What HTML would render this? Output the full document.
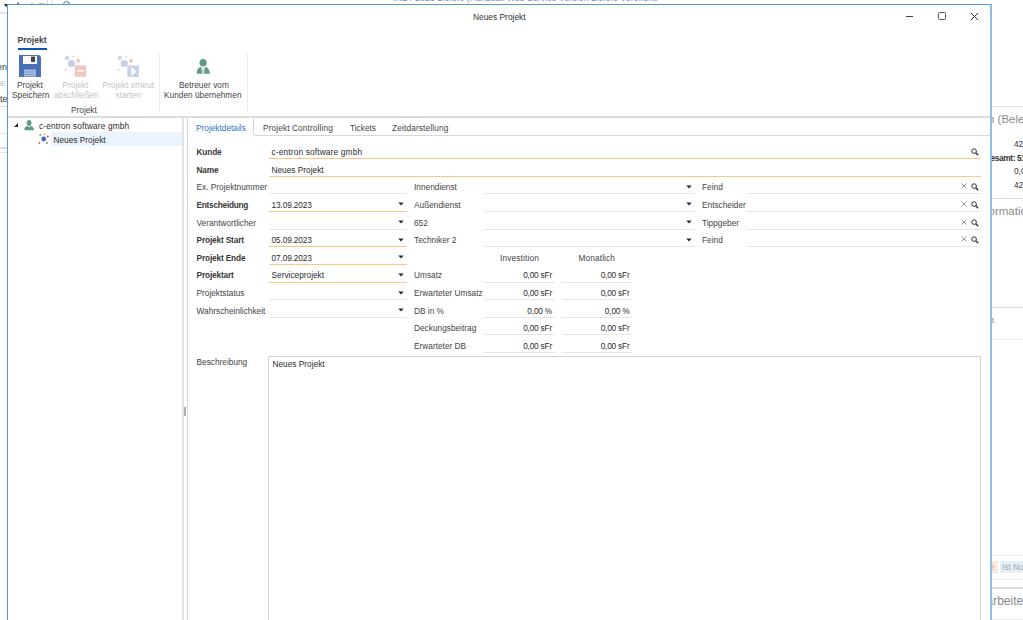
<!DOCTYPE html>
<html><head><meta charset="utf-8">
<style>
*{margin:0;padding:0;box-sizing:border-box}
html,body{width:1023px;height:620px;overflow:hidden;background:#fff;font-family:"Liberation Sans",sans-serif;position:relative}
.a{position:absolute}
.t{position:absolute;font-size:8.3px;line-height:10px;white-space:nowrap;color:#444}
.v{color:#2c2c2c}
.b{font-weight:bold;color:#383838;letter-spacing:-0.15px}
.d{color:#c4c4c4}
.hl{position:absolute;height:1px;background:#e6e6e6}
.ol{position:absolute;height:1px;background:#f7c986}
.arr{position:absolute;width:0;height:0;border-left:2.5px solid transparent;border-right:2.5px solid transparent;border-top:3px solid #333}
.r{text-align:right}
</style></head><body>

<!-- background app (behind dialog) -->
<div class="a" style="left:0;top:0;width:1023px;height:620px;background:#fff"></div>
<div class="hl" style="left:0;top:12px;width:7px;background:#e2e2e2;height:2px"></div>
<div class="t" style="left:-3px;top:61.5px;color:#333;font-size:9px">en</div>
<div class="t" style="left:-3px;top:78px;color:#bbb;font-size:9px">re</div>
<div class="t" style="left:-5px;top:93.5px;color:#333;font-size:9px">nte</div>
<div class="hl" style="left:0;top:106px;width:7px;background:#ddd"></div>
<div class="hl" style="left:0;top:133px;width:7px;background:#e2e2e2"></div>
<div class="hl" style="left:0;top:147px;width:7px;background:#ddd;height:2px"></div>
<div class="hl" style="left:0;top:152px;width:7px;background:#e2e2e2"></div>
<div class="a" style="left:4px;top:4px;width:0;height:0;border-left:2px solid transparent;border-right:2px solid transparent;border-top:3px solid #222"></div>
<div class="a" style="left:16.5px;top:2px;width:0;height:0;border-left:1.5px solid transparent;border-right:1.5px solid transparent;border-bottom:2.5px solid #333"></div>
<div class="a" style="left:47px;top:0;width:1px;height:5px;background:#ddd"></div>
<div class="a" style="left:51px;top:0;width:1px;height:5px;background:#e4e4e4"></div>
<div class="a" style="left:63px;top:0.5px;width:7px;height:7px;border:1.2px solid #3a7fd0;border-radius:50%"></div>
<div class="a" style="left:31px;top:3px;width:2px;height:1px;background:#bbb"></div><div class="a" style="left:38px;top:3px;width:7px;height:1px;background:#ccc"></div>
<div class="t" style="left:393px;top:-7px;font-size:8.6px;color:#888;letter-spacing:0.1px">.NET 2023 1.0.0.0 (Handball Web Service Version 1.0.0.0 Veröffentl</div>

<div class="hl" style="left:992px;top:106px;width:31px;background:#e0e0e0"></div>
<div class="t" style="left:988px;top:112.5px;font-size:11.5px;line-height:13px;color:#8a8a8a">n (Bele</div>
<div class="t" style="left:1014px;top:139px;color:#333">42</div>
<div class="t b" style="left:990.5px;top:153px;color:#333;letter-spacing:-0.35px">esamt: 51</div>
<div class="t" style="left:1014px;top:166px;color:#333">0,0</div>
<div class="t" style="left:1014px;top:180px;color:#333">42</div>
<div class="hl" style="left:992px;top:198px;width:31px;background:#e0e0e0"></div>
<div class="t" style="left:988.5px;top:205px;font-size:11.5px;line-height:13px;color:#8a8a8a">ormatio</div>
<div class="hl" style="left:992px;top:307px;width:31px;background:#dadada"></div>
<div class="t" style="left:989.5px;top:315px;color:#666;font-size:9px">k</div>
<div class="hl" style="left:992px;top:339px;width:31px;background:#f0f0f0"></div>
<div class="hl" style="left:992px;top:555px;width:31px;background:#efefef"></div>
<div class="a" style="left:992px;top:561px;width:6px;height:12px;background:#fbeadb"></div>
<div class="t" style="left:990px;top:562px;color:#bbb">e</div>
<div class="a" style="left:1000px;top:561px;width:23px;height:12px;background:#e6eef8"></div>
<div class="t" style="left:1002px;top:562px;color:#9aa">Ist Nu</div>
<div class="hl" style="left:992px;top:579px;width:31px;background:#efefef"></div>
<div class="hl" style="left:992px;top:587px;width:31px;background:#dcdcdc;height:2px"></div>
<div class="t" style="left:986.5px;top:594.5px;font-size:12px;line-height:13px;color:#8a8a8a">arbeitet</div>
<div class="hl" style="left:992px;top:619px;width:31px;background:#eee"></div>

<!-- dialog window -->
<div class="a" id="win" style="left:7px;top:4px;width:985px;height:620px;background:#fff;border-left:1px solid #5597d8;border-top:1px solid #5597d8;border-right:2px solid #8fbce3"></div>

<!-- title bar -->
<div class="t" style="left:473px;top:12px;font-size:8.4px;color:#333">Neues Projekt</div>
<div class="a" style="left:906px;top:16px;width:7px;height:1px;background:#444"></div>
<div class="a" style="left:938.3px;top:12.3px;width:7.7px;height:7.5px;border:1px solid #555;border-radius:1.5px"></div>
<svg class="a" style="left:970px;top:12px" width="9" height="9" viewBox="0 0 9 9"><path d="M1 1L8 8M8 1L1 8" stroke="#333" stroke-width="1"/></svg>

<!-- ribbon -->
<div class="t" style="left:17.5px;top:35px;font-size:8.6px;font-weight:bold;color:#444">Projekt</div>
<div class="a" style="left:17.5px;top:48px;width:29.5px;height:2px;background:#0a56b8"></div>

<!-- save icon -->
<svg class="a" style="left:19px;top:54.5px" width="23" height="23" viewBox="0 0 23 23">
<path d="M0 0H20L22 2V22H0Z" fill="#4a6fb6"/>
<rect x="4" y="1" width="14" height="8" fill="#fff"/>
<rect x="12" y="1.5" width="4" height="5.5" fill="#444"/>
<rect x="5" y="14.5" width="12" height="7" fill="#a9bde0"/>
<rect x="5" y="16.5" width="12" height="1" fill="#7f9ccf"/>
<rect x="5" y="19" width="12" height="1" fill="#7f9ccf"/>
</svg>
<div class="t" style="left:17px;top:80px">Projekt</div>
<div class="t" style="left:12px;top:90px">Speichern</div>

<!-- abschliessen icon -->
<svg class="a" style="left:58px;top:50px" width="32" height="30" viewBox="0 0 32 30">
<line x1="7.7" y1="19.8" x2="13" y2="14" stroke="#e8e8e8" stroke-width="0.8"/>
<line x1="15" y1="6.4" x2="13.5" y2="10" stroke="#e8e8e8" stroke-width="0.8"/>
<circle cx="9" cy="8" r="2.2" fill="#c9ddd2"/>
<circle cx="15.5" cy="6.4" r="1" fill="#c9ddd2"/>
<circle cx="13.5" cy="13.5" r="3.6" fill="#c3d0e8"/>
<circle cx="20.1" cy="10.7" r="2" fill="#f2c4ba"/>
<circle cx="7.7" cy="19.8" r="1" fill="#f2c4ba"/>
<rect x="16.8" y="15.5" width="11.3" height="11.3" fill="#f2c6bc"/>
<rect x="19.1" y="20.1" width="6.7" height="1.5" fill="#fff"/>
</svg>
<div class="t d" style="left:62.5px;top:80px">Projekt</div>
<div class="t d" style="left:54px;top:90px">abschließen</div>

<!-- erneut starten icon -->
<svg class="a" style="left:110px;top:50px" width="32" height="30" viewBox="0 0 32 30">
<line x1="8.5" y1="19.8" x2="14" y2="14" stroke="#e8e8e8" stroke-width="0.8"/>
<circle cx="9.8" cy="8" r="2.2" fill="#c9ddd2"/>
<circle cx="16.2" cy="6.4" r="1" fill="#c9ddd2"/>
<circle cx="14.3" cy="13.5" r="3.6" fill="#c3d0e8"/>
<circle cx="20.9" cy="10.7" r="2" fill="#f2c4ba"/>
<circle cx="8.5" cy="19.8" r="1" fill="#f2c4ba"/>
<rect x="17.3" y="15.5" width="11.6" height="11.5" fill="#c6d3ea"/>
<path d="M21.4 17V26L26.5 21.5Z" fill="#fff"/>
</svg>
<div class="t d" style="left:102.5px;top:80px">Projekt erneut</div>
<div class="t d" style="left:115.5px;top:90px">starten</div>

<div class="t" style="left:71px;top:104.8px">Projekt</div>
<div class="a" style="left:159px;top:53px;width:1px;height:60px;background:#ececec"></div>

<!-- betreuer icon -->
<svg class="a" style="left:196px;top:58px" width="15" height="17" viewBox="0 0 15 17">
<ellipse cx="7.1" cy="4.7" rx="3.6" ry="3.8" fill="#5f9a82"/>
<path d="M0.8 15.8C0.8 11.5 2.5 9.3 4.6 8.9L7.1 10.2L9.6 8.9C11.7 9.3 13.8 11.5 13.8 15.8Z" fill="#5f9a82"/>
<path d="M5.2 9.2L7.1 10.4L9 9.2L8 15.5H6.2Z" fill="#fff"/>
<path d="M6.7 10.5H7.5L7.7 14.5H6.5Z" fill="#8fb8a6"/>
</svg>
<div class="t" style="left:179px;top:80px">Betreuer vom</div>
<div class="t" style="left:164px;top:90px">Kunden übernehmen</div>
<div class="a" style="left:247px;top:53px;width:1px;height:60px;background:#ececec"></div>

<!-- ribbon bottom line -->
<div class="a" style="left:8px;top:116px;width:982px;height:2px;background:#dcdcdc"></div>

<!-- tree panel -->
<div class="a" style="left:182px;top:118px;width:2px;height:502px;background:#e2e2e2"></div>
<div class="a" style="left:51px;top:132px;width:131px;height:14px;background:#ebf3fc"></div>
<div class="a" style="left:13.5px;top:123px;width:0;height:0;border-bottom:4.5px solid #222;border-left:4.5px solid transparent"></div>
<svg class="a" style="left:24px;top:120px" width="11" height="11" viewBox="0 0 11 11">
<ellipse cx="5.1" cy="3" rx="2.4" ry="2.9" fill="#5f9a82"/>
<path d="M0.3 10.2C0.3 7.6 2 6.2 3.3 6L5.1 7.2L6.9 6C8.2 6.2 10 7.6 10 10.2Z" fill="#5f9a82"/>
</svg>
<div class="t v" style="left:39px;top:121px;letter-spacing:0.14px">c-entron software gmbh</div>
<svg class="a" style="left:38px;top:133px" width="12" height="12" viewBox="0 0 12 12">
<circle cx="5.7" cy="6" r="2.4" fill="#3d6cc0"/>
<circle cx="2.3" cy="2" r="0.9" fill="#5e9c80"/>
<circle cx="6.5" cy="1.3" r="0.8" fill="#5e9c80"/>
<circle cx="9.8" cy="3.6" r="1.1" fill="#e2583e"/>
<circle cx="1.3" cy="10" r="0.9" fill="#e2583e"/>
<circle cx="8.8" cy="10" r="1" fill="#5e9c80"/>
</svg>
<div class="t v" style="left:53.5px;top:135px">Neues Projekt</div>
<div class="a" style="left:184.3px;top:407px;width:1.4px;height:9px;background:#acacac"></div>

<!-- tab control -->
<div class="a" style="left:187px;top:118px;width:1px;height:502px;background:#d6d6d6"></div>
<div class="a" style="left:187px;top:118px;width:67px;height:17px;border-left:1px solid #d6d6d6;border-right:1px solid #d6d6d6;background:#fff"></div>
<div class="a" style="left:254px;top:134.5px;width:736px;height:1px;background:#d6d6d6"></div>
<div class="t" style="left:196px;top:122.5px;color:#2f73c8">Projektdetails</div>
<div class="t" style="left:263px;top:122.5px;letter-spacing:0.11px">Projekt Controlling</div>
<div class="t" style="left:350px;top:122.5px">Tickets</div>
<div class="t" style="left:392px;top:122.5px;letter-spacing:0.14px">Zeitdarstellung</div>

<!-- form -->
<div class="t b" style="left:196.5px;top:147.0px;">Kunde</div>
<div class="ol" style="left:268.7px;top:158px;width:712.1px"></div>
<div class="t v" style="left:271.5px;top:147.0px;letter-spacing:0.16px">c-entron software gmbh</div>
<svg class="a" style="left:971.3px;top:148.0px" width="8" height="8" viewBox="0 0 8 8"><circle cx="3.1" cy="3.1" r="2.3" fill="none" stroke="#2a2a2a" stroke-width="0.95"/><path d="M4.8 4.8L7.2 7.2" stroke="#2a2a2a" stroke-width="1.3"/></svg>
<div class="t b" style="left:196.5px;top:164.6px;">Name</div>
<div class="ol" style="left:268.7px;top:176px;width:712.1px"></div>
<div class="t v" style="left:271.5px;top:164.6px;">Neues Projekt</div>
<div class="t " style="left:196.5px;top:182.2px;">Ex. Projektnummer</div>
<div class="hl" style="left:268.7px;top:193px;width:138.3px"></div>
<div class="t b" style="left:196.5px;top:199.9px;letter-spacing:-0.27px">Entscheidung</div>
<div class="ol" style="left:268.7px;top:211px;width:138.3px"></div>
<svg class="a" style="left:398.3px;top:202.4px" width="6" height="4" viewBox="0 0 6 4"><path d="M0.3 0.6H5.7L3 3.6Z" fill="#2a2a2a"/></svg>
<div class="t v" style="left:271.5px;top:199.9px;letter-spacing:-0.12px">13.09.2023</div>
<div class="t " style="left:196.5px;top:217.5px;">Verantwortlicher</div>
<div class="hl" style="left:268.7px;top:229px;width:138.3px"></div>
<svg class="a" style="left:398.3px;top:220.0px" width="6" height="4" viewBox="0 0 6 4"><path d="M0.3 0.6H5.7L3 3.6Z" fill="#2a2a2a"/></svg>
<div class="t b" style="left:196.5px;top:235.1px;">Projekt Start</div>
<div class="ol" style="left:268.7px;top:246px;width:138.3px"></div>
<svg class="a" style="left:398.3px;top:237.6px" width="6" height="4" viewBox="0 0 6 4"><path d="M0.3 0.6H5.7L3 3.6Z" fill="#2a2a2a"/></svg>
<div class="t v" style="left:271.5px;top:235.1px;letter-spacing:-0.12px">05.09.2023</div>
<div class="t b" style="left:196.5px;top:252.7px;">Projekt Ende</div>
<div class="ol" style="left:268.7px;top:264px;width:138.3px"></div>
<svg class="a" style="left:398.3px;top:255.2px" width="6" height="4" viewBox="0 0 6 4"><path d="M0.3 0.6H5.7L3 3.6Z" fill="#2a2a2a"/></svg>
<div class="t v" style="left:271.5px;top:252.7px;letter-spacing:-0.12px">07.09.2023</div>
<div class="t b" style="left:196.5px;top:270.3px;">Projektart</div>
<div class="ol" style="left:268.7px;top:282px;width:138.3px"></div>
<svg class="a" style="left:398.3px;top:272.8px" width="6" height="4" viewBox="0 0 6 4"><path d="M0.3 0.6H5.7L3 3.6Z" fill="#2a2a2a"/></svg>
<div class="t v" style="left:271.5px;top:270.3px;">Serviceprojekt</div>
<div class="t " style="left:196.5px;top:288.0px;">Projektstatus</div>
<div class="hl" style="left:268.7px;top:299px;width:138.3px"></div>
<svg class="a" style="left:398.3px;top:290.5px" width="6" height="4" viewBox="0 0 6 4"><path d="M0.3 0.6H5.7L3 3.6Z" fill="#2a2a2a"/></svg>
<div class="t " style="left:196.5px;top:305.6px;">Wahrscheinlichkeit</div>
<div class="hl" style="left:268.7px;top:317px;width:138.3px"></div>
<svg class="a" style="left:398.3px;top:308.1px" width="6" height="4" viewBox="0 0 6 4"><path d="M0.3 0.6H5.7L3 3.6Z" fill="#2a2a2a"/></svg>
<div class="t " style="left:414.0px;top:182.2px;">Innendienst</div>
<div class="hl" style="left:484.4px;top:193px;width:210.4px"></div>
<svg class="a" style="left:685.6px;top:184.7px" width="6" height="4" viewBox="0 0 6 4"><path d="M0.3 0.6H5.7L3 3.6Z" fill="#2a2a2a"/></svg>
<div class="t " style="left:414.0px;top:199.9px;">Außendienst</div>
<div class="hl" style="left:484.4px;top:211px;width:210.4px"></div>
<svg class="a" style="left:685.6px;top:202.4px" width="6" height="4" viewBox="0 0 6 4"><path d="M0.3 0.6H5.7L3 3.6Z" fill="#2a2a2a"/></svg>
<div class="t " style="left:414.0px;top:217.5px;">652</div>
<div class="hl" style="left:484.4px;top:229px;width:210.4px"></div>
<svg class="a" style="left:685.6px;top:220.0px" width="6" height="4" viewBox="0 0 6 4"><path d="M0.3 0.6H5.7L3 3.6Z" fill="#2a2a2a"/></svg>
<div class="t " style="left:414.0px;top:235.1px;">Techniker 2</div>
<div class="hl" style="left:484.4px;top:246px;width:210.4px"></div>
<svg class="a" style="left:685.6px;top:237.6px" width="6" height="4" viewBox="0 0 6 4"><path d="M0.3 0.6H5.7L3 3.6Z" fill="#2a2a2a"/></svg>
<div class="t " style="left:702.0px;top:182.2px;">Feind</div>
<div class="hl" style="left:747.4px;top:193px;width:233.4px"></div>
<svg class="a" style="left:961px;top:183.4px" width="6" height="6" viewBox="0 0 6 6"><path d="M0.5 0.5L5.5 5.5M5.5 0.5L0.5 5.5" stroke="#9a9a9a" stroke-width="1"/></svg>
<svg class="a" style="left:971.3px;top:183.2px" width="8" height="8" viewBox="0 0 8 8"><circle cx="3.1" cy="3.1" r="2.3" fill="none" stroke="#2a2a2a" stroke-width="0.95"/><path d="M4.8 4.8L7.2 7.2" stroke="#2a2a2a" stroke-width="1.3"/></svg>
<div class="t " style="left:702.0px;top:199.9px;">Entscheider</div>
<div class="hl" style="left:747.4px;top:211px;width:233.4px"></div>
<svg class="a" style="left:961px;top:201.1px" width="6" height="6" viewBox="0 0 6 6"><path d="M0.5 0.5L5.5 5.5M5.5 0.5L0.5 5.5" stroke="#9a9a9a" stroke-width="1"/></svg>
<svg class="a" style="left:971.3px;top:200.9px" width="8" height="8" viewBox="0 0 8 8"><circle cx="3.1" cy="3.1" r="2.3" fill="none" stroke="#2a2a2a" stroke-width="0.95"/><path d="M4.8 4.8L7.2 7.2" stroke="#2a2a2a" stroke-width="1.3"/></svg>
<div class="t " style="left:702.0px;top:217.5px;">Tippgeber</div>
<div class="hl" style="left:747.4px;top:229px;width:233.4px"></div>
<svg class="a" style="left:961px;top:218.7px" width="6" height="6" viewBox="0 0 6 6"><path d="M0.5 0.5L5.5 5.5M5.5 0.5L0.5 5.5" stroke="#9a9a9a" stroke-width="1"/></svg>
<svg class="a" style="left:971.3px;top:218.5px" width="8" height="8" viewBox="0 0 8 8"><circle cx="3.1" cy="3.1" r="2.3" fill="none" stroke="#2a2a2a" stroke-width="0.95"/><path d="M4.8 4.8L7.2 7.2" stroke="#2a2a2a" stroke-width="1.3"/></svg>
<div class="t " style="left:702.0px;top:235.1px;">Feind</div>
<div class="hl" style="left:747.4px;top:246px;width:233.4px"></div>
<svg class="a" style="left:961px;top:236.3px" width="6" height="6" viewBox="0 0 6 6"><path d="M0.5 0.5L5.5 5.5M5.5 0.5L0.5 5.5" stroke="#9a9a9a" stroke-width="1"/></svg>
<svg class="a" style="left:971.3px;top:236.1px" width="8" height="8" viewBox="0 0 8 8"><circle cx="3.1" cy="3.1" r="2.3" fill="none" stroke="#2a2a2a" stroke-width="0.95"/><path d="M4.8 4.8L7.2 7.2" stroke="#2a2a2a" stroke-width="1.3"/></svg>
<div class="t " style="left:500.0px;top:252.7px;letter-spacing:0.15px">Investition</div>
<div class="t " style="left:578.5px;top:252.7px;letter-spacing:0.12px">Monatlich</div>
<div class="t " style="left:414.0px;top:270.3px;">Umsatz</div>
<div class="hl" style="left:484.4px;top:282px;width:70.4px"></div>
<div class="hl" style="left:561.7px;top:282px;width:70.4px"></div>
<div class="t r v" style="left:484px;width:68px;top:270.3px;letter-spacing:-0.2px">0,00 sFr</div>
<div class="t r v" style="left:561px;width:68.5px;top:270.3px;letter-spacing:-0.2px">0,00 sFr</div>
<div class="t " style="left:414.0px;top:288.0px;">Erwarteter Umsatz</div>
<div class="hl" style="left:484.4px;top:299px;width:70.4px"></div>
<div class="hl" style="left:561.7px;top:299px;width:70.4px"></div>
<div class="t r v" style="left:484px;width:68px;top:288.0px;letter-spacing:-0.2px">0,00 sFr</div>
<div class="t r v" style="left:561px;width:68.5px;top:288.0px;letter-spacing:-0.2px">0,00 sFr</div>
<div class="t " style="left:414.0px;top:305.6px;">DB in %</div>
<div class="hl" style="left:484.4px;top:317px;width:70.4px"></div>
<div class="hl" style="left:561.7px;top:317px;width:70.4px"></div>
<div class="t r v" style="left:484px;width:68px;top:305.6px;letter-spacing:-0.2px">0,00 %</div>
<div class="t r v" style="left:561px;width:68.5px;top:305.6px;letter-spacing:-0.2px">0,00 %</div>
<div class="t " style="left:414.0px;top:323.2px;">Deckungsbeitrag</div>
<div class="hl" style="left:484.4px;top:334px;width:70.4px"></div>
<div class="hl" style="left:561.7px;top:334px;width:70.4px"></div>
<div class="t r v" style="left:484px;width:68px;top:323.2px;letter-spacing:-0.2px">0,00 sFr</div>
<div class="t r v" style="left:561px;width:68.5px;top:323.2px;letter-spacing:-0.2px">0,00 sFr</div>
<div class="t " style="left:414.0px;top:340.8px;">Erwarteter DB</div>
<div class="hl" style="left:484.4px;top:352px;width:70.4px"></div>
<div class="hl" style="left:561.7px;top:352px;width:70.4px"></div>
<div class="t r v" style="left:484px;width:68px;top:340.8px;letter-spacing:-0.2px">0,00 sFr</div>
<div class="t r v" style="left:561px;width:68.5px;top:340.8px;letter-spacing:-0.2px">0,00 sFr</div>
<div class="t" style="left:196.5px;top:357px">Beschreibung</div>
<div class="a" style="left:268px;top:356px;width:713px;height:270px;border:1px solid #d3d3d3"></div>
<div class="t v" style="left:272.5px;top:358.5px">Neues Projekt</div>

</body></html>
